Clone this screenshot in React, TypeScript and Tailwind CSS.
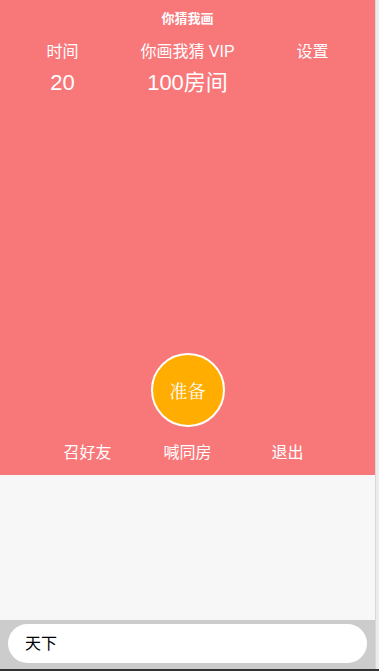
export default function App() {
  const font = "font-['Liberation_Sans','Noto_Sans_CJK_SC',sans-serif]"
  return (
    <div className={`flex h-[671px] w-[379px] flex-col ${font}`}>
      <div className="flex flex-1 min-h-0">
        <div className="flex w-[375px] flex-col">
          <div className="flex h-[475px] flex-col bg-[#f8787a] text-white">
            <div className="pt-[11px] text-center text-[13px] font-bold leading-[16px]">你猜我画</div>
            <div className="mt-[16px] grid grid-cols-3 text-center">
              <div className="flex flex-col items-center">
                <span className="text-[16px] leading-[18px]">时间</span>
                <span className="mt-[10px] text-[22px] leading-[24px]">20</span>
              </div>
              <div className="flex flex-col items-center">
                <span className="text-[16px] leading-[18px]">你画我猜 VIP</span>
                <span className="mt-[10px] text-[22px] leading-[24px]">100房间</span>
              </div>
              <div className="flex flex-col items-center">
                <span className="text-[16px] leading-[18px]">设置</span>
              </div>
            </div>
            <div className="mt-auto flex justify-center">
              <div className="flex h-[74px] w-[74px] items-center justify-center rounded-full border-2 border-white bg-[#ffad00] font-['Noto_Serif_CJK_SC','AR_PL_UMing_CN',serif] text-[18px]">
                准备
              </div>
            </div>
            <div className="mx-auto mb-[12px] mt-[16px] grid w-[300px] grid-cols-3 text-center text-[16px] leading-[20px]">
              <span>召好友</span>
              <span>喊同房</span>
              <span>退出</span>
            </div>
          </div>
          <div className="flex-1 bg-[#f7f7f7]" />
          <div className="flex h-[49px] items-start bg-[#cccccc] px-[8px] pt-[4px]">
            <div className="flex h-[39px] w-full items-center rounded-full bg-white pl-[17px] text-[16px] text-black">
              天下
            </div>
          </div>
        </div>
        <div className="w-[4px] border-l border-[#d8d8d8] bg-[#ececec]" />
      </div>
      <div className="h-[2px] bg-[#333333]" />
    </div>
  )
}
